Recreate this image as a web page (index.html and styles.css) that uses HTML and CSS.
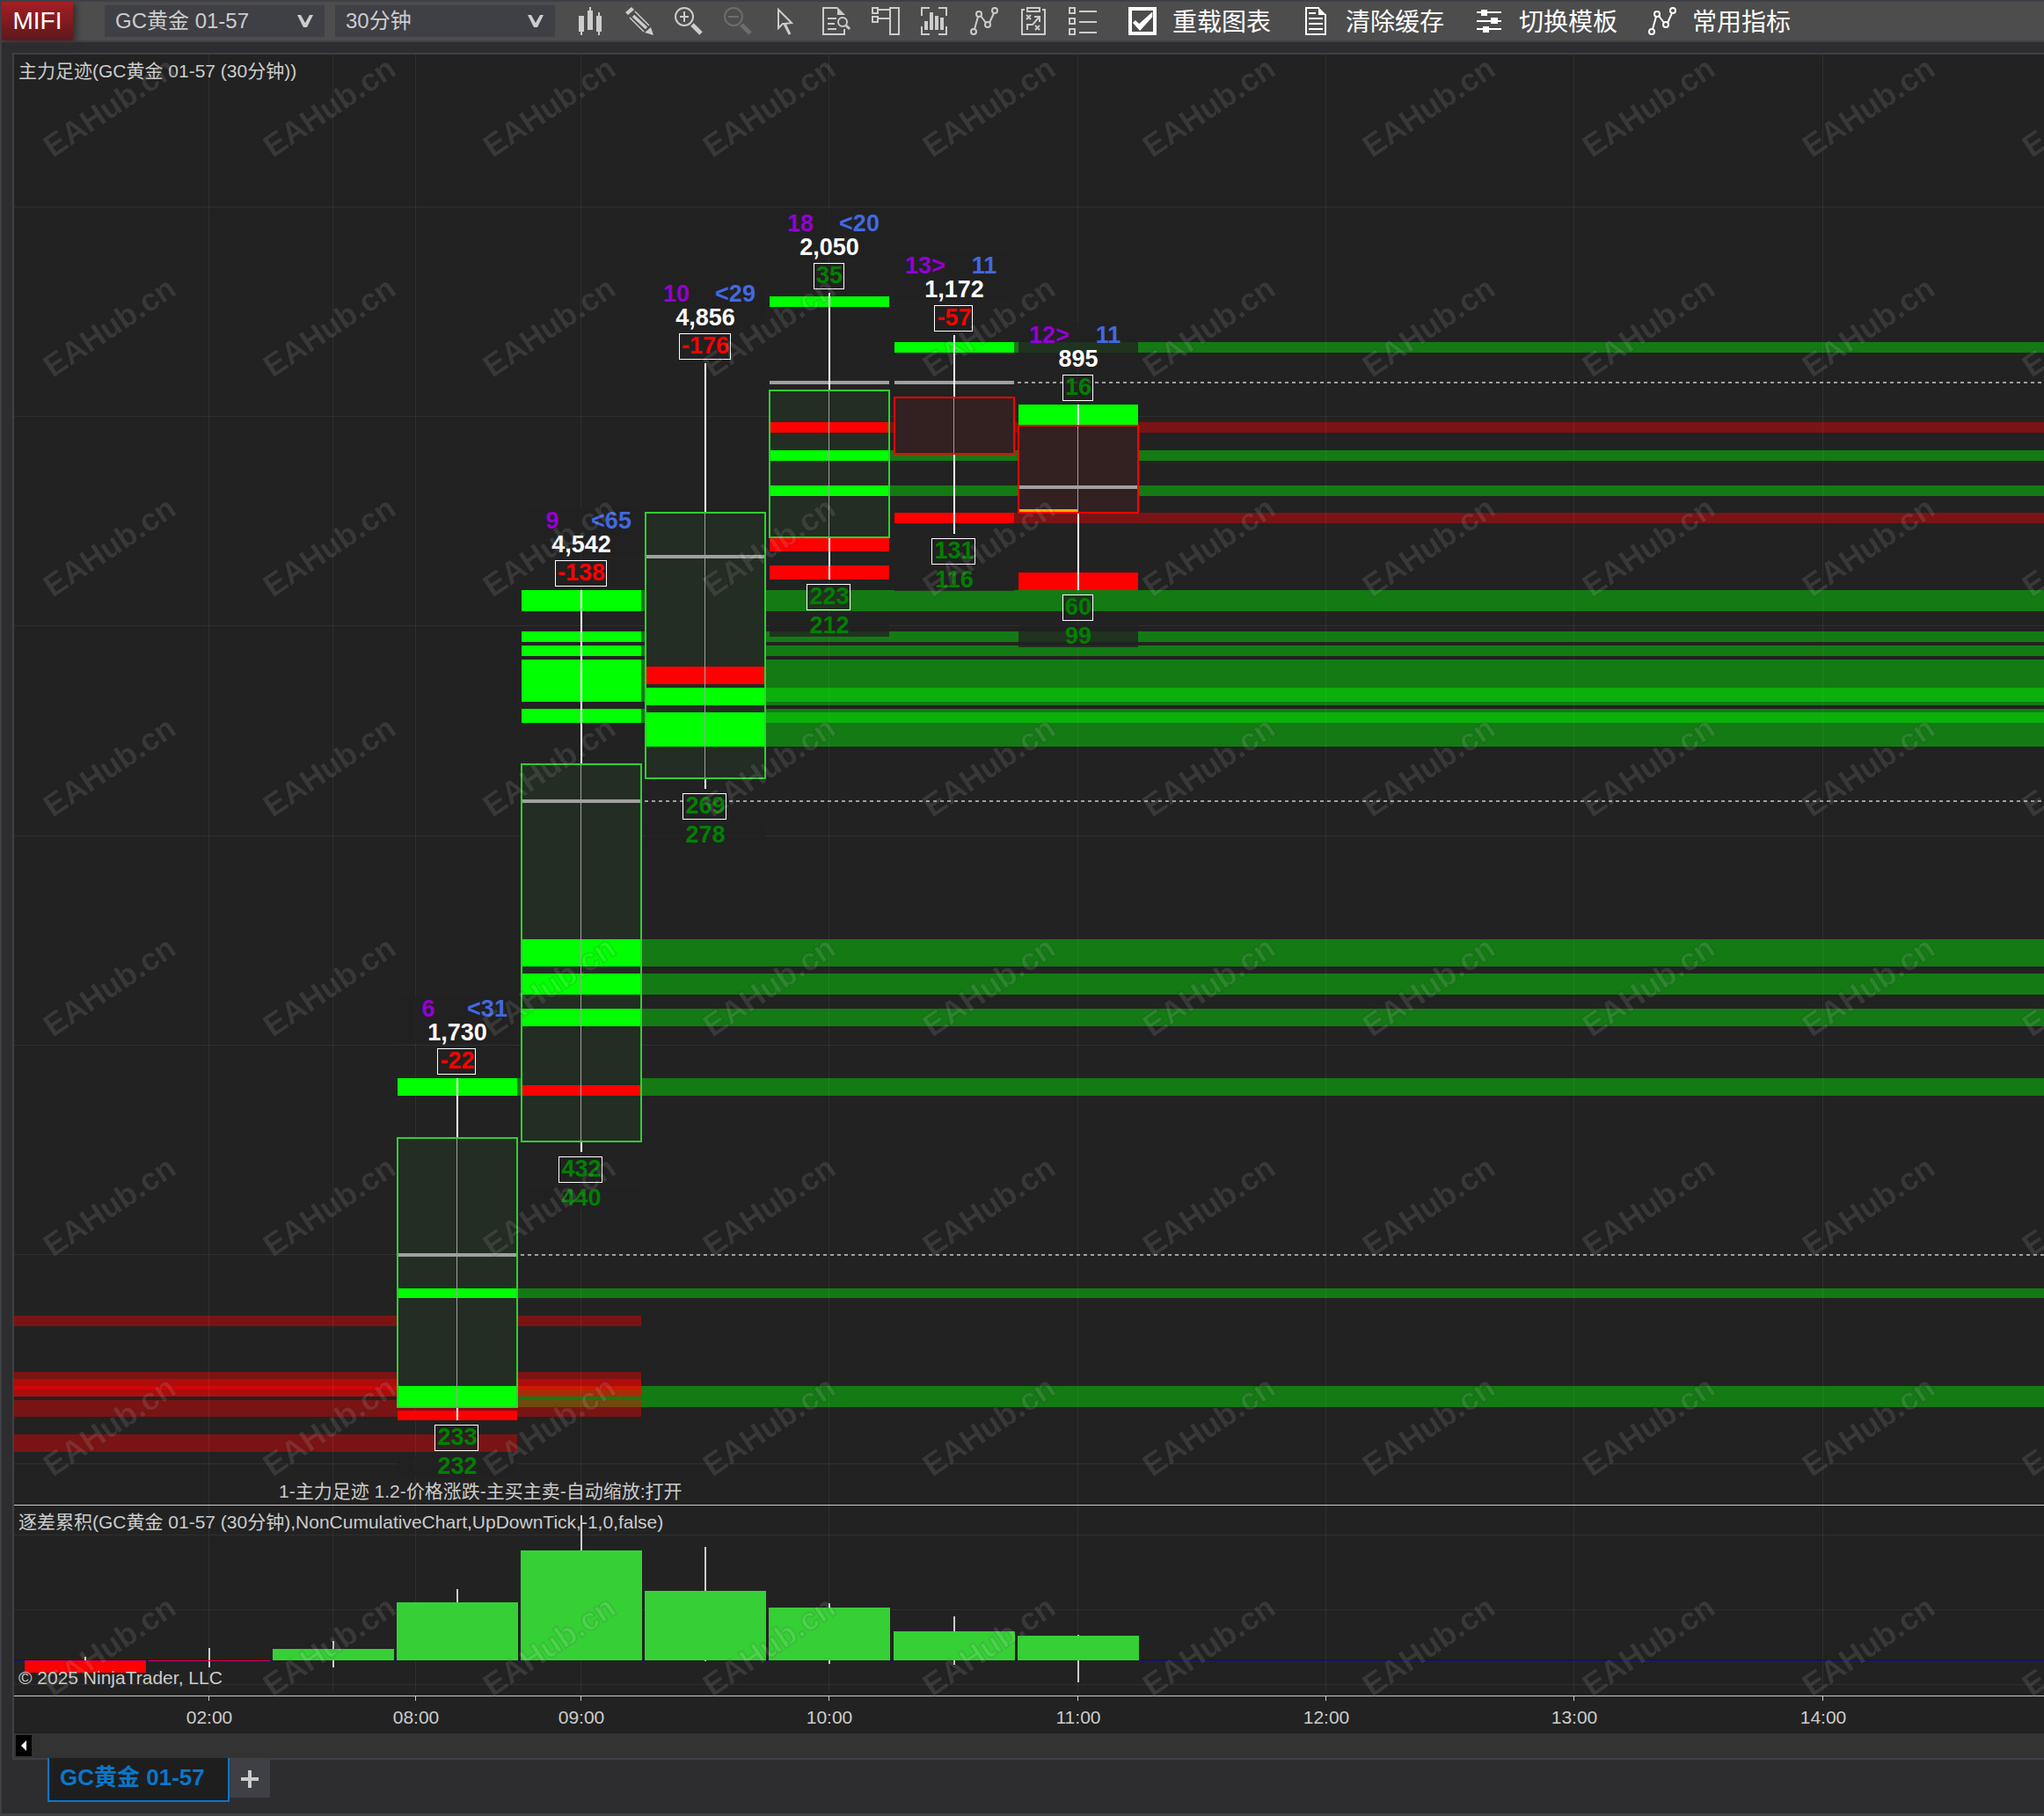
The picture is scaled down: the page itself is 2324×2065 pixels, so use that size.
FILE: index.html
```html
<!DOCTYPE html>
<html lang="zh-CN">
<head>
<meta charset="utf-8">
<title>GC黄金 01-57</title>
<link rel="stylesheet" href="styles.css">
</head>
<body>
<div class="window">
  <header class="toolbar">
    <button class="brand" type="button">MIFI</button>
    <div class="pickers">
      <span class="picker">
        <select aria-label="合约"><option>GC黄金 01-57</option></select>
        <svg class="chevron" viewBox="0 0 18 14" aria-hidden="true"><path d="M0 0H4L9 9L14 0H18L11 14H7Z"/></svg>
      </span>
      <span class="picker">
        <select aria-label="周期"><option>30分钟</option></select>
        <svg class="chevron" viewBox="0 0 18 14" aria-hidden="true"><path d="M0 0H4L9 9L14 0H18L11 14H7Z"/></svg>
      </span>
    </div>
    <div class="tools">
      <button class="tool" type="button" aria-label="K线样式"><svg class="icon" viewBox="0 0 32 32"><path class="solid" d="M3 10H9V28H7V32H5V28H3ZM13 4H15V0H17V4H19V26H13ZM23 10H25V6H27V10H29V28H27V32H25V28H23Z"/></svg></button>
      <button class="tool" type="button" aria-label="画图"><svg class="icon" viewBox="0 0 32 32"><path class="solid" d="M0 6L7 0L10 3L3 9ZM29 23L32 32L22 29Z"/><path d="M5 12L21 28M11 5L27 21" stroke-width="1.5"/><path d="M9 10L24 24" stroke-width="3.5"/></svg></button>
      <button class="tool" type="button" aria-label="放大"><svg class="icon" viewBox="0 0 32 32"><circle cx="11" cy="11" r="10"/><path d="M6 11H16M11 5V17"/><path d="M20 20L30 30" stroke-width="5"/></svg></button>
      <button class="tool off" type="button" aria-label="缩小" disabled><svg class="icon" viewBox="0 0 32 32"><circle cx="11" cy="11" r="10"/><path d="M5 11H17"/><path d="M20 20L30 30" stroke-width="5"/></svg></button>
      <button class="tool" type="button" aria-label="光标"><svg class="icon" viewBox="0 0 32 32"><path d="M6 3V24L11 19L13 19L21 18Z"/><path d="M13 19L19 31" stroke-width="3"/></svg></button>
      <button class="tool" type="button" aria-label="数据窗口"><svg class="icon" viewBox="0 0 32 32"><path d="M17 1H1V31H25V25M6 13H16M6 19H14M6 25H16"/><path class="solid" d="M17 0L26 9H17Z"/><circle cx="23" cy="17" r="5"/><path d="M27 21L31 25" stroke-width="3"/></svg></button>
      <button class="tool" type="button" aria-label="交易面板"><svg class="icon" viewBox="0 0 32 32"><path d="M1 1H7V7H1ZM1 11H7V17H1ZM21 1H31V31H21ZM8 3H20M8 13H20"/></svg></button>
      <button class="tool" type="button" aria-label="图表框"><svg class="icon" viewBox="0 0 32 32"><path d="M1 10V1H10M20 1H29V10M29 22V31H20M10 31H1V22"/><path class="solid" d="M4 16H8V26H4ZM10 6H14V26H10ZM16 10H20V26H16ZM22 12H26V26H22Z"/></svg></button>
      <button class="tool" type="button" aria-label="指标"><svg class="icon" viewBox="0 0 32 32"><path d="M5 25L9 11M12 10L18 18M22 18L27 7"/><circle cx="4" cy="28" r="3"/><circle cx="10" cy="8" r="3"/><circle cx="20" cy="20" r="3"/><circle cx="28" cy="4" r="3"/></svg></button>
      <button class="tool" type="button" aria-label="策略"><svg class="icon" viewBox="0 0 32 32"><path d="M6 3H3V31H29V3H26M9 1H23V5H9Z"/><path d="M8 9L13 14M13 9L8 14M18 21L23 26M23 21L18 26M9 26V20H15L22 12M17 11H23V17"/></svg></button>
      <button class="tool" type="button" aria-label="列表"><svg class="icon" viewBox="0 0 32 32"><path d="M1 1H7V7H1ZM1 13H7V19H1ZM1 25H7V31H1ZM12 5H32M12 17H32M12 29H32"/></svg></button>
    </div>
    <div class="actions">
      <label class="action"><input class="tick" type="checkbox" checked><span>重载图表</span></label>
      <button class="action" type="button"><svg class="icon" viewBox="0 0 32 32"><path d="M20 1H5V31H27V8M8 7H16M8 13H24M8 19H24M8 25H24"/><path class="solid" d="M19 0L28 9H19Z"/></svg><span>清除缓存</span></button>
      <button class="action" type="button"><svg class="icon" viewBox="0 0 32 32"><path d="M2 6H30M2 16H30M2 25H30"/><path class="solid" d="M7 3H14V10H7ZM18 12H26V19H18ZM9 22H16V29H9Z"/></svg><span>切换模板</span></button>
      <button class="action" type="button"><svg class="icon" viewBox="0 0 32 32"><path d="M5 25L9 11M12 10L18 18M22 18L27 7"/><circle cx="4" cy="28" r="3"/><circle cx="10" cy="8" r="3"/><circle cx="20" cy="20" r="3"/><circle cx="28" cy="4" r="3"/></svg><span>常用指标</span></button>
    </div>
  </header>

  <main class="chart">
    <section class="pane price">
      <svg class="plot" id="price" role="img" aria-label="主力足迹"></svg>
      <h2 class="caption">主力足迹(GC黄金 01-57 (30分钟))</h2>
      <p class="status">1-主力足迹 1.2-价格涨跌-主买主卖-自动缩放:打开</p>
    </section>
    <section class="pane delta">
      <svg class="plot" id="delta" role="img" aria-label="逐差累积"></svg>
      <h2 class="caption">逐差累积(GC黄金 01-57 (30分钟),NonCumulativeChart,UpDownTick,-1,0,false)</h2>
      <p class="credit">© 2025 NinjaTrader, LLC</p>
    </section>
    <div class="pane axis"><svg class="plot" id="axis" role="img" aria-label="时间轴"></svg></div>
    <svg class="watermark" aria-hidden="true">
      <defs>
        <pattern id="mark" width="250" height="250" patternUnits="userSpaceOnUse">
          <g transform="translate(29 118) rotate(-34)">
            <text class="mark-edge">EAHub.cn</text>
            <text class="mark-fill">EAHub.cn</text>
          </g>
        </pattern>
      </defs>
      <g transform="translate(15 0)"><rect width="100%" height="100%" fill="url(#mark)"/></g>
    </svg>
    <div class="scroller">
      <button class="scroll-left" type="button" aria-label="向左滚动"><svg viewBox="0 0 6 12" aria-hidden="true"><path d="M6 0V12L0 6Z"/></svg></button>
    </div>
  </main>

  <nav class="tabs">
    <a class="tab" href="#price">GC黄金 01-57</a>
    <button class="add" type="button" aria-label="新建标签"></button>
  </nav>
</div>
<script src="script.js"></script>
</body>
</html>
```
FILE: styles.css
```css
* { box-sizing: border-box; }

body {
  margin: 0;
  background: #2d2d30;
  color: #ccc;
  font: 21px/28px "Liberation Sans", "Noto Sans CJK SC", sans-serif;
}

button, select, input { font: inherit; color: inherit; margin: 0; }
button { border: 0; padding: 0; background: none; }
h2, p { margin: 0; font-size: inherit; font-weight: normal; }

.window {
  display: flex;
  flex-direction: column;
  min-height: 100vh;
  border: solid #3f3f46;
  border-width: 2px 0 3px 2px;
  overflow: hidden;
}

/* toolbar */
.toolbar {
  display: flex;
  align-items: center;
  height: 46px;
  background: #4d4d4d;
  border-bottom: 2px solid #3f3f46;
}
.brand {
  width: 81px;
  align-self: stretch;
  background: linear-gradient(#a51e24, #5c181c);
  box-shadow: 4px 2px 6px #333;
  color: #fff;
  font-size: 28px;
}
.pickers { display: flex; gap: 12px; margin: 0 24px 0 36px; }
.picker { display: grid; align-items: center; width: 250px; }
.picker select, .chevron { grid-area: 1 / 1; }
.picker select {
  width: 100%;
  height: 36px;
  padding: 0 12px;
  border: 0;
  border-radius: 0;
  appearance: none;
  background: #3f3f46;
  font-size: 24px;
}
.chevron {
  width: 18px;
  height: 14px;
  margin-right: 13px;
  justify-self: end;
  fill: #ccc;
  pointer-events: none;
}
.tools { display: flex; gap: 24px; }
.tool { display: flex; color: #ccc; }
.tool.off { color: #6d6d6d; }
.icon {
  width: 32px;
  height: 32px;
  fill: none;
  stroke: currentColor;
  stroke-width: 2;
  overflow: visible;
}
.icon .solid { fill: currentColor; stroke: none; }
.actions { display: flex; gap: 35px; margin-left: 36px; }
.action {
  display: flex;
  align-items: center;
  gap: 18px;
  height: 32px;
  color: #fff;
  font-size: 28px;
  line-height: 32px;
  white-space: nowrap;
}
.action span { padding-top: 4px; }
.tick {
  appearance: none;
  display: grid;
  width: 32px;
  height: 32px;
  border: 4px solid #fff;
}
.tick:checked::before {
  content: "";
  background: #fff;
  clip-path: polygon(4% 58%, 16% 46%, 34% 62%, 97% 6%, 97% 30%, 38% 96%);
}

/* chart */
.chart {
  flex: 1;
  display: flex;
  flex-direction: column;
  position: relative;
  margin: 12px 0 0 12px;
  border: solid #3f3f46;
  border-width: 2px 0 2px 2px;
  background: #222;
}
.pane {
  display: flex;
  flex-direction: column;
  justify-content: space-between;
  position: relative;
}
.price { flex: 1; min-height: 1649px; padding: 5px 5px 1px; }
.delta { height: 217px; padding: 5px 5px 6px; border-top: 1px solid #ccc; }
.axis { height: 43px; border-top: 1px solid #ccc; border-bottom: 2px solid #1e1e1e; }
.plot { position: absolute; inset: 0; width: 100%; height: 100%; }
.caption, .status, .credit { position: relative; }
.status { padding-left: 296px; }
.watermark {
  position: absolute;
  inset: 0;
  width: 100%;
  height: 100%;
  pointer-events: none;
}
.mark-edge, .mark-fill { font-size: 36px; font-weight: bold; }
.mark-edge { fill: none; stroke: #000; stroke-width: 2px; opacity: .1; }
.mark-fill { fill: #fff; opacity: .1; }

.scroller { height: 28px; padding: 2px; background: #333; position: relative; }
.scroll-left {
  display: flex;
  align-items: center;
  justify-content: center;
  width: 18px;
  height: 24px;
  background: #000;
}
.scroll-left svg { width: 6px; height: 12px; fill: #fff; }

/* plot parts */
.grid { fill: #fff; opacity: .06; }
.zone { opacity: .4; }
.lime { fill: #0f0; }
.red { fill: #f00; }
.orange { fill: #ffa500; }
.grey { fill: #a0a0a0; }
.bar { fill: #36d036; }
.light { fill: #ccc; }
.white { fill: #fff; }
.zero { fill: #0000d0; }
.shade { fill: #222; opacity: .8; }
.body { stroke-width: 2px; }
.body.up { fill: #232d23; stroke: #32cd32; }
.body.down { fill: #332021; stroke: #f00; }
.frame { fill: none; stroke-width: 2px; }
.frame.up { stroke: #32cd32; }
.frame.down { stroke: #f00; }
.dots { stroke: #a0a0a0; stroke-width: 2px; stroke-dasharray: 4 4; }
.chip { fill: rgba(34, 34, 34, .8); stroke: #fff; stroke-width: 1px; }
.num { font-size: 27px; font-weight: bold; text-anchor: middle; }
.num.bid { fill: #9400d3; }
.num.ask { fill: #4169e1; }
.num.vol { fill: #fff; }
.num.neg { fill: #f00; }
.num.pos { fill: #008000; }
.hour { fill: #ccc; font-size: 21px; text-anchor: middle; }

/* tabs */
.tabs { display: flex; align-items: flex-start; padding: 0 0 13px 52px; }
.tab {
  position: relative;
  margin-top: -2px;
  padding: 6px 26px 10px 12px;
  border: solid #0b76c8;
  border-width: 0 2px 2px;
  background: #1e1e1e;
  color: #0b76c8;
  font-size: 26px;
  font-weight: bold;
  line-height: 32px;
  text-decoration: none;
}
.add {
  width: 46px;
  height: 43px;
  background:
    linear-gradient(#ccc, #ccc) center / 20px 4px no-repeat,
    linear-gradient(#ccc, #ccc) center / 4px 20px no-repeat,
    #3f3f46;
}
```
FILE: script.js
```js
// All plot coordinates are measured from the window's top left corner.
const LEFT = 16;
const NS = 'http://www.w3.org/2000/svg';

function plot(id, top) {
  const g = document.createElementNS(NS, 'g');
  g.setAttribute('transform', `translate(${-LEFT} ${-top})`);
  document.getElementById(id).append(g);
  return g;
}
function add(parent, name, attrs, text) {
  const el = document.createElementNS(NS, name);
  for (const key in attrs) el.setAttribute(key, attrs[key]);
  if (text !== undefined) el.textContent = text;
  parent.append(el);
}
const rect = (g, cls, x, y, width, height) => add(g, 'rect', { class: cls, x, y, width, height });
const text = (g, cls, x, y, value) => add(g, 'text', { class: cls, x, y }, value);

// x: wick; wick: [high, low]; box: [top, bottom]; rows: [colour, top, bottom, extended]
const candles = [
  { x: 519, up: true, wick: [1226, 1615], box: [1293, 1601], poc: 1425, dots: 1427,
    rows: [['lime', 1226, 1246, 1], ['lime', 1465, 1476, 1], ['lime', 1576, 1600, 1], ['red', 1604, 1615]],
    bid: '6', ask: '<31', vol: '1,730', delta: '-22', low: ['233', '232'] },
  { x: 660, up: true, wick: [671, 1310], box: [868, 1299], poc: 909, dots: 911,
    rows: [['lime', 671, 695, 1], ['lime', 718, 730, 1], ['lime', 734, 746, 1], ['lime', 750, 798, 1],
      ['lime', 806, 822, 1], ['lime', 1068, 1099, 1], ['lime', 1107, 1131, 1], ['lime', 1147, 1167, 1],
      ['red', 1234, 1246]],
    bid: '9', ask: '<65', vol: '4,542', delta: '-138', low: ['432', '440'] },
  { x: 801, up: true, wick: [413, 897], box: [582, 886], poc: 631,
    rows: [['red', 758, 778], ['lime', 782, 802, 1], ['lime', 810, 849, 1]],
    bid: '10', ask: '<29', vol: '4,856', delta: '-176', low: ['269', '278'] },
  { x: 942, up: true, wick: [333, 659], box: [443, 612], poc: 433,
    rows: [['lime', 337, 349], ['red', 480, 492, 1], ['lime', 512, 524, 1], ['lime', 552, 564, 1],
      ['red', 612, 627], ['red', 643, 659]],
    bid: '18', ask: '<20', vol: '2,050', delta: '35', low: ['223', '212'] },
  { x: 1084, up: false, wick: [381, 607], box: [451, 517], poc: 433, dots: 435,
    rows: [['lime', 389, 401, 1], ['red', 583, 595, 1]],
    bid: '13>', ask: '11', vol: '1,172', delta: '-57', low: ['131', '116'] },
  { x: 1225, up: false, wick: [460, 671], box: [483, 584], poc: 552, open: 579,
    rows: [['lime', 460, 483], ['red', 651, 671]],
    bid: '12>', ask: '11', vol: '895', delta: '16', low: ['60', '99'] },
];

// zones carried over from the previous session: [left, right, top, bottom]
const carried = [
  [16, 729, 1496, 1508], [16, 729, 1560, 1580], [16, 729, 1568, 1588],
  [16, 729, 1576, 1588], [16, 729, 1592, 1611], [16, 588, 1631, 1651],
];

// x: wick; wick: [top, bottom]; value: [top, bottom]
const deltas = [
  { x: 96, wick: [1884, 1907], value: [1888, 1902], red: true },
  { x: 237, wick: [1874, 1896], value: [1888, 1889], red: true },
  { x: 378, wick: [1866, 1896], value: [1875, 1888] },
  { x: 519, wick: [1807, 1888], value: [1822, 1888] },
  { x: 660, wick: [1723, 1888], value: [1763, 1888] },
  { x: 801, wick: [1759, 1889], value: [1809, 1888] },
  { x: 942, wick: [1823, 1892], value: [1828, 1888] },
  { x: 1084, wick: [1838, 1893], value: [1855, 1888] },
  { x: 1225, wick: [1859, 1913], value: [1860, 1888] },
];

const hours = [[237, '02:00'], [472, '08:00'], [660, '09:00'], [942, '10:00'], [1225, '11:00'],
  [1507, '12:00'], [1789, '13:00'], [2072, '14:00']];
const verticals = hours.map(h => h[0]).concat(378);

// price pane
const price = plot('price', 62);
for (const tone of ['lime', 'red']) {
  for (const c of candles) {
    for (const [colour, top, bottom, extended] of c.rows) {
      if (extended && colour === tone) rect(price, `zone ${tone}`, c.x + 69, top, '100%', bottom - top);
    }
  }
}
for (const [x1, x2, top, bottom] of carried) rect(price, 'zone red', x1, top, x2 - x1, bottom - top);
for (const x of verticals) rect(price, 'grid', x, 62, 1, '100%');
for (const y of [235, 473, 711, 950, 1188, 1426, 1664]) rect(price, 'grid', 16, y, '100%', 1);
for (const c of candles) {
  if (c.dots) add(price, 'line', { class: 'dots', x1: c.x + 73, x2: 6000, y1: c.dots, y2: c.dots });
}

function chip(g, c, y, value) {
  const width = value.replace('-', '').length * 15 + (value[0] === '-' ? 9 : 0) + 4;
  const x = Math.floor(c.x - width / 2);
  add(g, 'rect', { class: 'chip', x: x + 0.5, y: y + 0.5, width, height: 29 });
}

for (const c of candles) {
  const [high, low] = c.wick;
  const [top, bottom] = c.box;
  const side = c.up ? 'up' : 'down';
  const left = c.x - 67;
  rect(price, 'shade', left, high - 94, 136, 54);
  rect(price, 'shade', left, low + 40, 136, 25);
  add(price, 'rect', { class: `body ${side}`, x: left, y: top + 1, width: 136, height: bottom - top - 2 });
  for (const [colour, y1, y2] of c.rows) rect(price, colour, left, y1, 136, y2 - y1);
  rect(price, 'grey', left, c.poc, 136, 4);
  if (c.open) rect(price, 'orange', left, c.open, 67, 4);
  add(price, 'rect', { class: `frame ${side}`, x: left, y: top + 1, width: 136, height: bottom - top - 2 });
  rect(price, 'white', c.x, high, 2, top - high);
  rect(price, 'grey', c.x, top + 2, 1, bottom - top - 4);
  rect(price, 'white', c.x, bottom, 2, low - bottom);

  const mid = c.x + 1;
  text(price, 'num bid', mid - 33, high - 70, c.bid);
  text(price, 'num ask', mid + 34, high - 70, c.ask);
  text(price, 'num vol', mid, high - 43, c.vol);
  chip(price, c, high - 34, c.delta);
  text(price, `num ${c.delta[0] === '-' ? 'neg' : 'pos'}`, mid, high - 11, c.delta);
  chip(price, c, low + 5, c.low[0]);
  text(price, 'num pos', mid, low + 28, c.low[0]);
  text(price, 'num pos', mid, low + 61, c.low[1]);
}

// delta pane
const delta = plot('delta', 1712);
for (const x of verticals) rect(delta, 'grid', x, 1712, 1, 211);
for (const y of [1745, 1830, 1915]) rect(delta, 'grid', 16, y, '100%', 1);
rect(delta, 'zero', 16, 1887, '100%', 1);
for (const d of deltas) {
  rect(delta, 'light', d.x, d.wick[0], 2, d.wick[1] - d.wick[0]);
  rect(delta, d.red ? 'red' : 'bar', d.x - 68, d.value[0], 138, d.value[1] - d.value[0]);
}

// time axis
const axis = plot('axis', 1929);
for (const [x, label] of hours) {
  rect(axis, 'light', x, 1929, 1, 5);
  text(axis, 'hour', x + 1, 1960, label);
}
```
